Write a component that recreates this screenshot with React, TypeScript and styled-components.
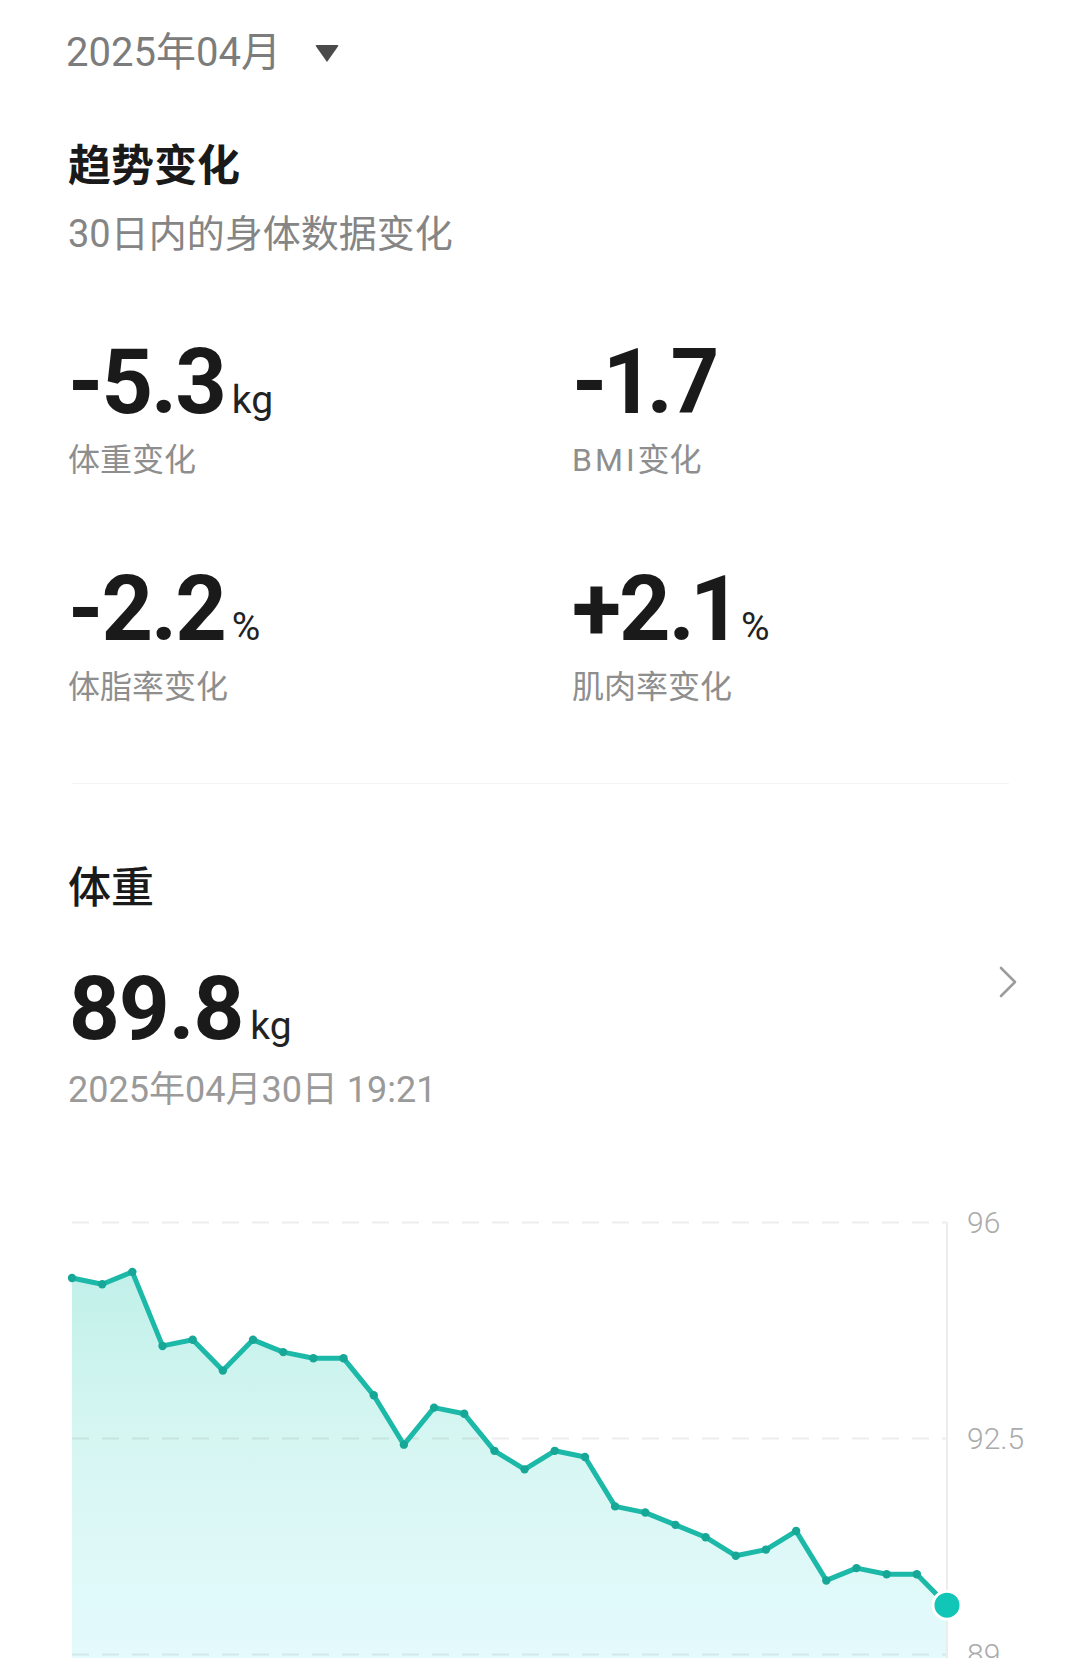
import React from "react";
import styled, { createGlobalStyle } from "styled-components";

const GlobalStyle = createGlobalStyle`
  html, body { margin: 0; padding: 0; background: #ffffff; }
  body {
    font-family: Roboto, "Noto Sans CJK SC", sans-serif;
    -webkit-font-smoothing: antialiased;
  }
  #root { width: 1080px; height: 1658px; overflow: hidden; }
`;

const Page = styled.div`
  box-sizing: border-box;
  width: 1080px;
  height: 1658px;
  overflow: hidden;
  padding: 33px 61px 0 68px;
  display: flex;
  flex-direction: column;
  background: #ffffff;
`;

const MonthPicker = styled.div`
  display: flex;
  align-items: center;
  height: 40px;
`;

const MonthText = styled.span`
  font-size: 40px;
  line-height: 1;
  color: #7c7c7c;
  margin-left: -2px;
`;

const Caret = styled.span`
  margin-left: 34px;
  width: 0;
  height: 0;
  border-left: 12px solid transparent;
  border-right: 12px solid transparent;
  border-top: 17px solid #4a4a4a;
  border-radius: 2px;
`;

const SectionTitle = styled.h2<{ $top: number; $weight?: number }>`
  margin: ${(p) => p.$top}px 0 0 0;
  font-size: 43px;
  line-height: 1;
  font-weight: ${(p) => p.$weight ?? 700};
  color: #1a1a1a;
`;

const SubTitle = styled.div`
  margin-top: 27px;
  font-size: 38px;
  line-height: 1;
  color: #858585;
`;

const StatGrid = styled.div`
  margin-top: 84px;
  display: grid;
  grid-template-columns: 504px 1fr;
  row-gap: 87.5px;
`;

const Stat = styled.div`
  display: flex;
  flex-direction: column;
`;

const BigValue = styled.div<{ $size: number; $track: number }>`
  font-size: ${(p) => p.$size}px;
  line-height: 92px;
  font-weight: 700;
  color: #1a1a1a;
  white-space: nowrap;
  letter-spacing: ${(p) => p.$track}px;
  font-variant-numeric: proportional-nums;
`;

const Unit = styled.span`
  margin-left: 7px;
  font-size: 39px;
  line-height: 1;
  font-weight: 400;
  letter-spacing: 0;
  color: #222222;
`;

const StatLabel = styled.div`
  margin-top: 15.5px;
  font-size: 32px;
  line-height: 1;
  color: #8e8e8e;
`;

const Latin = styled.span`
  letter-spacing: 3px;
`;

const Divider = styled.div`
  margin: 80px 10px 0 4px;
  height: 2px;
  background: #f4f4f4;
`;

const ValueRow = styled.div`
  margin-top: 53.5px;
  display: flex;
  justify-content: space-between;
  align-items: flex-start;
`;

const DateText = styled.div`
  margin-top: 16px;
  font-size: 36px;
  line-height: 38px;
  color: #9a9a9a;
`;

const ChartWrap = styled.div`
  margin: 81px -61px 0 -68px;
  height: 468px;
`;

const ChartSvg = styled.svg`
  display: block;
  width: 1080px;
  height: 468px;
`;

const AxisLabel = styled.text`
  font-family: Roboto, sans-serif;
  font-size: 30px;
  font-weight: 300;
  fill: #ababab;
`;

const weights = [
  95.1, 95.0, 95.2, 94.0, 94.1, 93.6, 94.1, 93.9, 93.8, 93.8, 93.2, 92.4, 93.0,
  92.9, 92.3, 92.0, 92.3, 92.2, 91.4, 91.3, 91.1, 90.9, 90.6, 90.7, 91.0, 90.2,
  90.4, 90.3, 90.3, 89.8,
];

const X0 = 72;
const X1 = 947;
const Y96 = 1222.5;
const PX_PER_KG = 61.714;

const px = (i: number) => X0 + (i * (X1 - X0)) / (weights.length - 1);
const py = (w: number) => Y96 + (96 - w) * PX_PER_KG;

function WeightChart() {
  const pts = weights.map((w, i) => [px(i), py(w)] as const);
  const line = pts.map(([x, y]) => `${x.toFixed(1)},${y.toFixed(1)}`).join(" ");
  const area = `${line} ${X1},1658 ${X0},1658`;
  const grid = [
    { y: Y96, label: "96" },
    { y: Y96 + 3.5 * PX_PER_KG, label: "92.5" },
    { y: Y96 + 7 * PX_PER_KG, label: "89" },
  ];
  const last = pts[pts.length - 1];
  return (
    <ChartSvg viewBox="0 1190 1080 468">
      <defs>
        <linearGradient id="fillGrad" x1="0" y1="1260" x2="0" y2="1658" gradientUnits="userSpaceOnUse">
          <stop offset="0" stopColor="#c0f0e9" />
          <stop offset="0.45" stopColor="#d6f6f2" />
          <stop offset="1" stopColor="#e4fafc" />
        </linearGradient>
      </defs>
      <polygon points={area} fill="url(#fillGrad)" />
      {grid.map((g) => (
        <line
          key={g.label}
          x1={X0}
          x2={X1}
          y1={g.y}
          y2={g.y}
          stroke="rgba(0,0,0,0.07)"
          strokeWidth={2}
          strokeDasharray="17 13"
        />
      ))}
      <line x1={X1} x2={X1} y1={Y96} y2={1658} stroke="#ececec" strokeWidth={2} />
      <polyline
        points={line}
        fill="none"
        stroke="#1cb8a8"
        strokeWidth={5}
        strokeLinejoin="round"
        strokeLinecap="round"
      />
      {pts.slice(0, -1).map(([x, y], i) => (
        <circle key={i} cx={x} cy={y} r={4.2} fill="#17a797" />
      ))}
      <circle cx={last[0]} cy={last[1]} r={14} fill="#11c6b6" stroke="#ffffff" strokeWidth={3} />
      {grid.map((g) => (
        <AxisLabel key={g.label} x={967} y={g.y + 10.7}>
          {g.label}
        </AxisLabel>
      ))}
    </ChartSvg>
  );
}

function Chevron() {
  return (
    <svg width="22" height="34" viewBox="0 0 22 34" style={{ display: "block", marginTop: 2 }}>
      <path d="M4 3 L18 17 L4 31" fill="none" stroke="#9c9c9c" strokeWidth="2.6" strokeLinecap="round" strokeLinejoin="round" />
    </svg>
  );
}

const stats = [
  { value: "-5.3", unit: "kg", latin: "", label: "体重变化" },
  { value: "-1.7", unit: "", latin: "BMI", label: "变化" },
  { value: "-2.2", unit: "%", latin: "", label: "体脂率变化" },
  { value: "+2.1", unit: "%", latin: "", label: "肌肉率变化" },
];

export default function App() {
  return (
    <>
      <GlobalStyle />
      <Page>
        <MonthPicker>
          <MonthText>2025年04月</MonthText>
          <Caret />
        </MonthPicker>

        <SectionTitle $top={71.5}>趋势变化</SectionTitle>
        <SubTitle>30日内的身体数据变化</SubTitle>

        <StatGrid>
          {stats.map((s) => (
            <Stat key={s.value}>
              <BigValue $size={90} $track={-2}>
                {s.value}
                {s.unit && <Unit>{s.unit}</Unit>}
              </BigValue>
              <StatLabel>
                {s.latin && <Latin>{s.latin}</Latin>}
                {s.label}
              </StatLabel>
            </Stat>
          ))}
        </StatGrid>

        <Divider />

        <SectionTitle $top={82.8} $weight={500}>体重</SectionTitle>
        <ValueRow>
          <BigValue $size={89} $track={-2}>
            89.8<Unit>kg</Unit>
          </BigValue>
          <Chevron />
        </ValueRow>
        <DateText>2025年04月30日 19:21</DateText>

        <ChartWrap>
          <WeightChart />
        </ChartWrap>
      </Page>
    </>
  );
}
